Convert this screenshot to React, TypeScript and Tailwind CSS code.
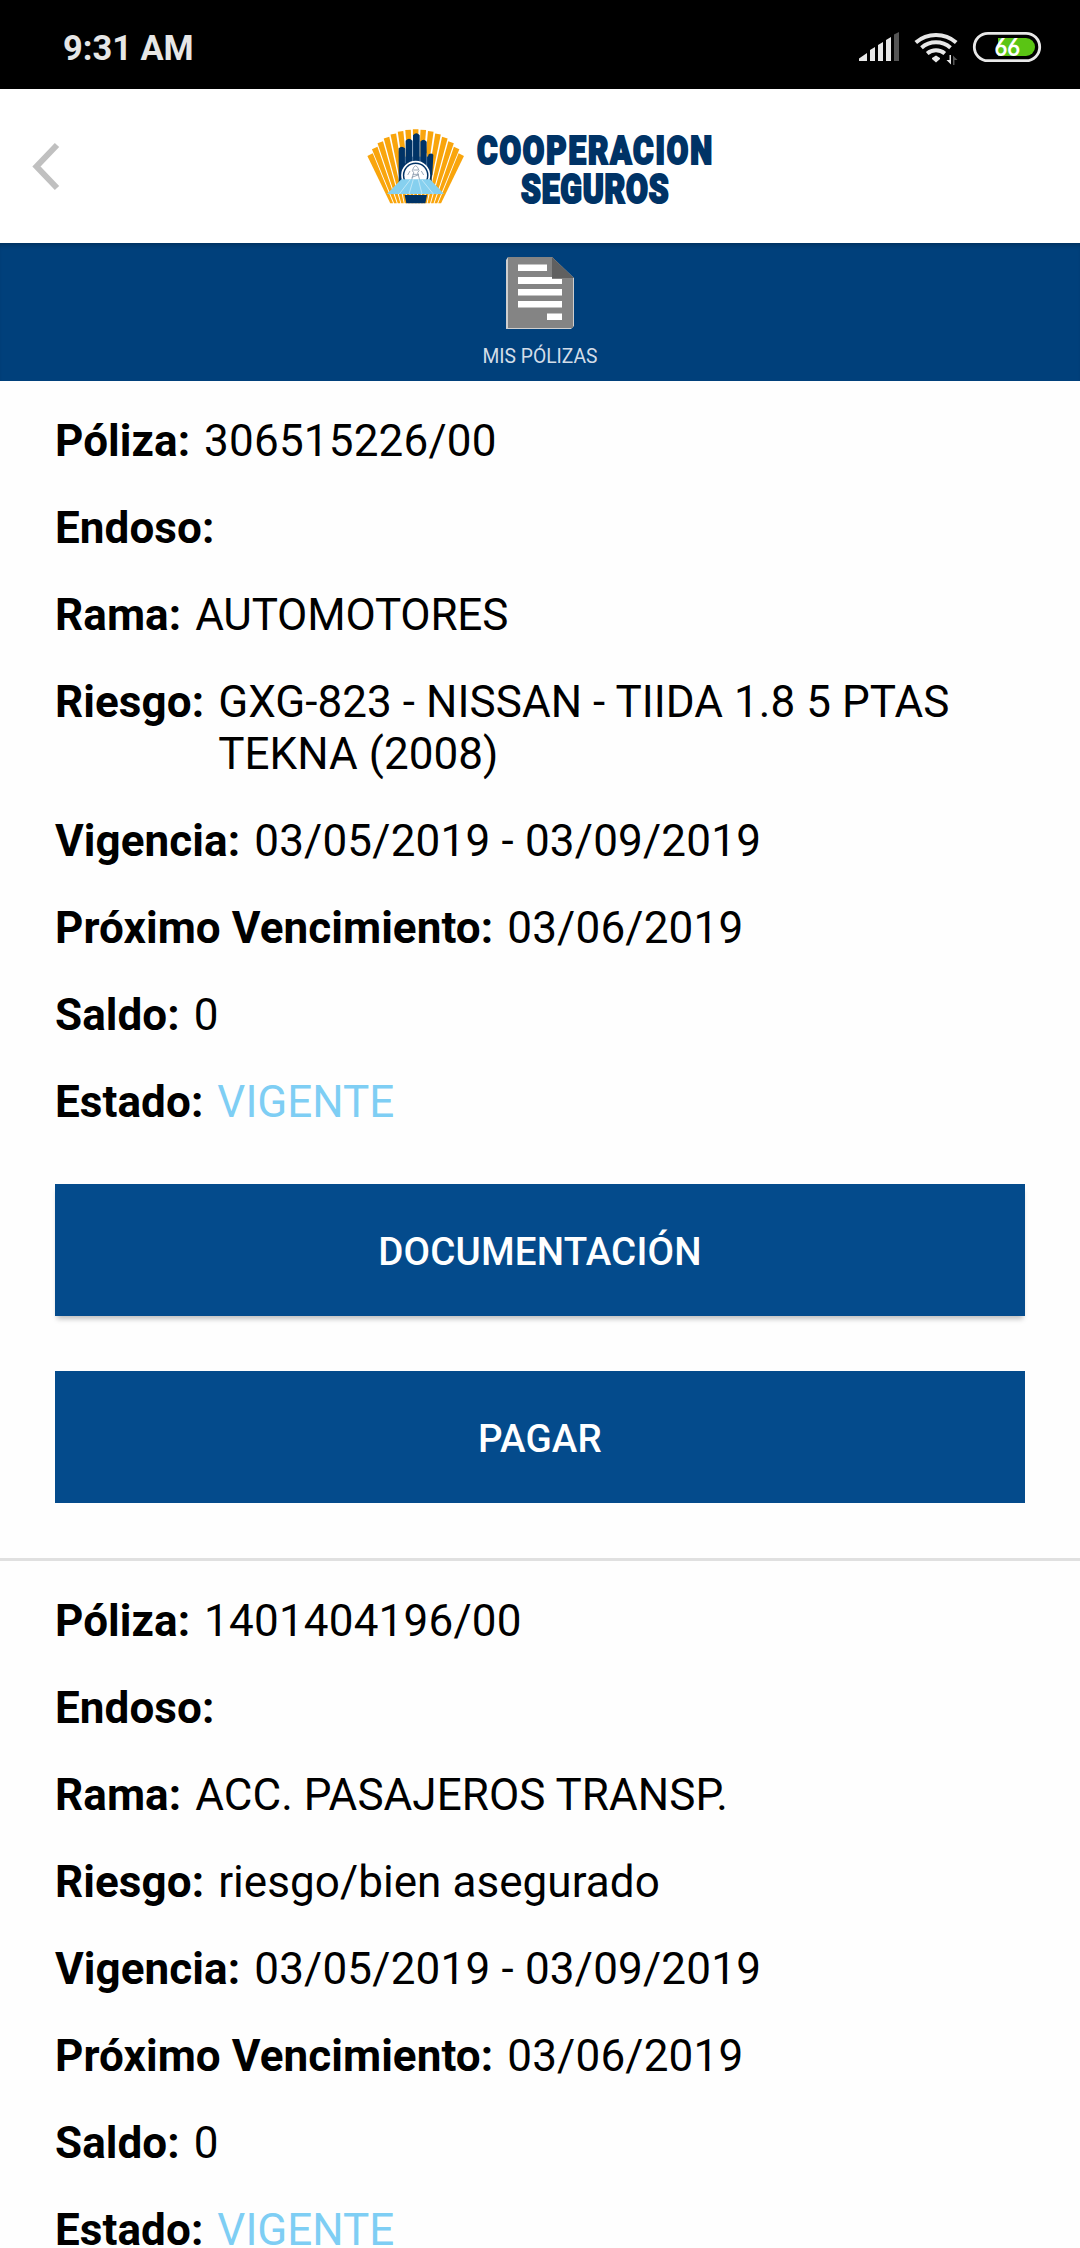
const BOTTOM = 250;
const FX = 167;
const FY = 412;
const RAYS = [-7, -6, -5, -4, -3, -2, -1, 0, 1, 2, 3, 4, 5, 6, 7];

function ray(i: number) {
  const a = (i * 3.42 * Math.PI) / 180;
  const top = 28 + i * i * 1.55;
  const x = (y: number, off: number) => FX + (FY - y) * Math.tan(a + (off * Math.PI) / 180);
  const w = 1.25;
  return [
    [x(top, -w), top - i * 0.6],
    [x(top, w), top + i * 0.6],
    [x(BOTTOM, w), BOTTOM],
    [x(BOTTOM, -w), BOTTOM],
  ]
    .map((p) => p.map((n) => n.toFixed(1)).join(","))
    .join(" ");
}

function Emblem() {
  return (
    <svg viewBox="0 0 330 270" className="h-[90px] w-[110px] shrink-0">
      {RAYS.map((i) => (
        <polygon key={i} points={ray(i)} fill="#f9a50c" />
      ))}
      <g fill="#003366">
        <path d="M116 190V85q9-10 19 0V190zM137 190V62q10-12 20 0V190zM159 190V46q10-12 20 0V190zM181 190V65q9-11 19 0V190zM200 190V120l6-17q8-6 14 1l-3 60-10 26z" />
        <rect x="117" y="110" width="98" height="76" />
      </g>
      <path d="M136 86V130M158 62V128M180 66V130M200 100V140" stroke="#6f93b5" strokeWidth="2" />
      <circle cx="167" cy="166" r="41" fill="#003366" stroke="#fff" strokeWidth="5" />
      <circle cx="167" cy="166" r="34" fill="#fff" />
      <path d="M155 180l6-22-4-6 4-10 6-5 6 5 4 10-4 6 6 22M143 165l7-12M191 165l-7-12M160 150h14M158 163h18M155 172l22-8" fill="none" stroke="#8797aa" strokeWidth="2.5" />
      <path d="M124 178h86l42 44H81z" fill="#86d0ef" />
      <path d="M150 180l-32 42M160 178l-13 44M175 178l11 44M186 180l34 42" stroke="#c9ebf8" strokeWidth="2.5" />
      <path d="M134 225h67l-5 25h-57z" fill="#003366" />
    </svg>
  );
}

function Logo() {
  return (
    <div className="flex h-[90px] w-[360px]">
      <Emblem />
      <svg
        viewBox="470 120 250 90"
        className="h-[90px] w-[250px] shrink-0 overflow-visible font-['Roboto'] font-black"
        fill="#003366"
        stroke="#003366"
        strokeWidth="2.2"
      >
        <text x="477" y="164" fontSize="39.500" letterSpacing="2.400" textLength="237" lengthAdjust="spacingAndGlyphs">COOPERACION</text>
        <text x="521" y="202.500" fontSize="40.500" letterSpacing="1" textLength="148.500" lengthAdjust="spacingAndGlyphs">SEGUROS</text>
      </svg>
    </div>
  );
}

function StatusIcons() {
  return (
    <svg viewBox="0 0 240 69" className="h-[69px] w-[240px]">
      <g fill="#e8e8e8">
        <path d="M19 41v-2.500l8-5.500v8zM30 41V30l5-3v14zM38 41V25l5-3v19zM46 41V20l5-3v24z" />
        <path d="M54 41V14.500l5-2.500v29z" fill="#555" />
        <path d="M92 38l4-2.500 4 2.500v1l-4 3.500-4-3.500z" />
      </g>
      <g fill="none" stroke="#e8e8e8" strokeWidth="4">
        <path d="M75.800 22.500a31 31 0 0 1 40.400 0M81.500 27.800a22 22 0 0 1 29 0M87.200 33.600a13.500 13.500 0 0 1 17.600 0" />
      </g>
      <path d="M111 35v9.500l-4.500-4.500h3V35z" fill="#e8e8e8" />
      <path d="M113 45v-9.500l4.500 4.500h-3V45z" fill="#555" />
      <rect x="134.300" y="13.300" width="65.400" height="27.400" rx="13.700" fill="#000" stroke="#e8e8e8" strokeWidth="2.800" />
      <path d="M158 18h28a9 9 0 0 1 0 18h-28z" fill="#5ac514" />
      <text x="154.500" y="35.800" fontSize="24" textLength="25.500" lengthAdjust="spacingAndGlyphs" fill="#fff" className="font-['Lato'] font-bold">66</text>
    </svg>
  );
}

function DocumentIcon() {
  return (
    <svg viewBox="0 0 68 72" className="h-[72px] w-[68px]">
      <path d="M0 3 2 0h44l22 21v48l-3 3H0z" fill="#cfcfcf" />
      <path d="M2 0h44l21 21v50H2z" fill="#848484" />
      <path d="M46 0l22 21H46z" fill="#606060" />
      <path d="M12 7.500h29V14H12zM12 20h34v2h10v5H12zM12 32h44v6.500H12zM12 44h44v6.500H12zM41 56.500h15V63H41z" fill="#fff" />
    </svg>
  );
}

function Field({ label, value, tone = "tracking-[0.06px]" }: { label: string; value: string; tone?: string }) {
  return (
    <div className="flex gap-[14px]">
      <span className="shrink-0 font-bold tracking-[0.080px]">{label}:</span>
      <span className={tone}>{value}</span>
    </div>
  );
}

type Policy = { poliza: string; rama: string; ramaTone: string; riesgo: string };

const DIGITS = "tracking-[0.200px]";

function PolicyCard({ poliza, rama, ramaTone, riesgo }: Policy) {
  return (
    <section className="border-b-[3px] border-[#e0e0e0] px-[55px] pt-[34px] pb-[55px]">
      <div className="flex flex-col gap-[35px] text-[44px] leading-[52px]">
        <Field label="Póliza" value={poliza} tone={DIGITS} />
        <Field label="Endoso" value="" />
        <Field label="Rama" value={rama} tone={ramaTone} />
        <Field label="Riesgo" value={riesgo} />
        <Field label="Vigencia" value="03/05/2019 - 03/09/2019" tone={DIGITS} />
        <Field label="Próximo Vencimiento" value="03/06/2019" tone={DIGITS} />
        <Field label="Saldo" value="0" />
        <Field label="Estado" value="VIGENTE" tone="text-[#7ecef4]" />
      </div>
      <div className="mt-[56px] flex flex-col gap-[55px] text-[38.500px] font-medium tracking-[0.200px] text-white">
        <button className="h-[132px] bg-[#044b8c] pt-[4px] shadow-[0_5px_5px_-2px_rgba(0,0,0,0.25)]">DOCUMENTACIÓN</button>
        <button className="h-[132px] bg-[#044b8c] pt-[4px]">PAGAR</button>
      </div>
    </section>
  );
}

const POLICIES: Policy[] = [
  {
    poliza: "306515226/00",
    rama: "AUTOMOTORES",
    ramaTone: "tracking-[-0.200px]",
    riesgo: "GXG-823 - NISSAN - TIIDA 1.8 5 PTAS TEKNA (2008)",
  },
  { poliza: "1401404196/00", rama: "ACC. PASAJEROS TRANSP.", ramaTone: "tracking-[0.060px]", riesgo: "riesgo/bien asegurado" },
];

export default function App() {
  return (
    <div className="flex h-[2248px] w-[1080px] flex-col overflow-hidden bg-[#fefefe] font-['Roboto',sans-serif] text-black">
      <div className="flex h-[89px] shrink-0 justify-between bg-black pt-[10px] pl-[63px]">
        <span className="pt-[18px] text-[34.400px] leading-[40px] font-bold text-[#e6e6e6]">9:31 AM</span>
        <div className="pt-[10px]">
          <StatusIcons />
        </div>
      </div>
      <header className="flex h-[154px] shrink-0 bg-white pt-[31px] pl-[32px]">
        <svg viewBox="0 0 30 50" className="mt-[22px] h-[50px] w-[30px]" fill="none" stroke="#c0c0c0" strokeWidth="6">
          <path d="M25 3 4.500 24.500 25 46" />
        </svg>
        <div className="ml-[298px]">
          <Logo />
        </div>
      </header>
      <nav className="flex h-[138px] shrink-0 flex-col items-center bg-[#00407b] pt-[14px] text-[19.300px] text-[#d3dde8] shadow-[inset_0_5px_5px_-3px_rgba(0,0,0,0.25)]">
        <DocumentIcon />
        <span className="mt-[14px] leading-[28px]">MIS PÓLIZAS</span>
      </nav>
      <main>
        {POLICIES.map((p) => (
          <PolicyCard key={p.poliza} {...p} />
        ))}
      </main>
    </div>
  );
}
